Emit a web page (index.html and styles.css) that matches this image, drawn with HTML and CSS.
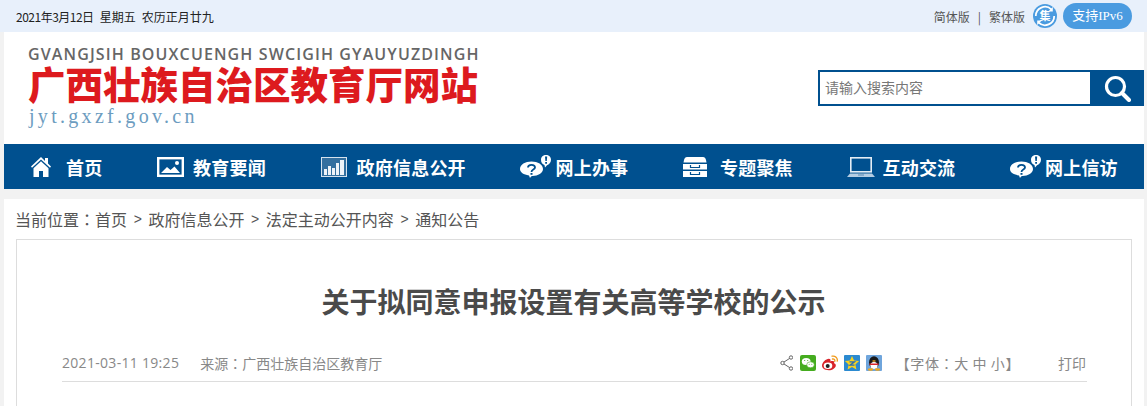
FILE: index.html
```html
<!DOCTYPE html>
<html lang="zh-CN">
<head>
    <meta charset="utf-8">
    <title>关于拟同意申报设置有关高等学校的公示</title>
    <link rel="stylesheet" href="styles.css">
</head>
<body>
    <div class="topbar">
        <div class="date">
            <span class="date-day">2021年3月12日</span>
            <span>星期五</span>
            <span>农历正月廿九</span>
        </div>
        <div class="topbar-right">
            <span class="lang">简体版</span>
            <span class="lang-sep">|</span>
            <span class="lang">繁体版</span>
            <span class="care-icon">
                <svg width="24" height="24" viewBox="0 0 24 24">
                    <circle cx="12" cy="12" r="12" fill="#4a9be0"/>
                    <path d="M2.800 12a9.200 9.200 0 0 1 15.500-6.700M21.200 12a9.200 9.200 0 0 1-15.500 6.700" fill="none" stroke="#fff" stroke-width="1.800"/>
                    <path d="M19.800 3v4.500h-4.500zM4.200 21v-4.500h4.500z" fill="#fff"/>
                    <text x="12" y="16" class="care-char">集</text>
                </svg>
            </span>
            <span class="ipv6">支持IPv6</span>
        </div>
    </div>

    <div class="header">
        <div class="logo">
            <div class="logo-zhuang">GVANGJSIH BOUXCUENGH SWCIGIH GYAUYUZDINGH</div>
            <div class="logo-title">广西壮族自治区教育厅网站</div>
            <div class="logo-url">jyt.gxzf.gov.cn</div>
        </div>
        <div class="search">
            <div class="search-input">请输入搜索内容</div>
            <div class="search-btn">
                <svg width="27" height="27" viewBox="0 0 27 27">
                    <circle cx="11.500" cy="11.500" r="9" fill="none" stroke="#fff" stroke-width="3.200"/>
                    <path d="M18 18l7 7" stroke="#fff" stroke-width="4" stroke-linecap="round"/>
                </svg>
            </div>
        </div>
    </div>

    <div class="nav">
        <a class="nav-item">
            <svg class="nav-icon" width="22" height="20" viewBox="0 0 22 20">
                <path d="M11 0L1 9.500l1 1.200L11 2.500l9 8.200 1-1.200-3-2.900V1h-3v3z" fill="#fff"/>
                <path d="M11 4.200l-7.500 7V20H9v-6h4v6h5.500v-8.800z" fill="#fff"/>
            </svg>
            <span class="nav-label nav-label-first">首页</span>
        </a>
        <a class="nav-item">
            <svg class="nav-icon" width="27" height="20" viewBox="0 0 27 20">
                <rect x="1.200" y="1.200" width="24.600" height="17.600" fill="none" stroke="#fff" stroke-width="2.400"/>
                <path d="M4 16l6-6 3.500 3 4-3.500 5.500 6.500z" fill="#fff"/>
                <circle cx="20" cy="6" r="2" fill="#fff"/>
            </svg>
            <span class="nav-label">教育要闻</span>
        </a>
        <a class="nav-item">
            <svg class="nav-icon nav-icon-chart" width="26" height="20" viewBox="0 0 26 20">
                <rect x="0.500" y="0.500" width="25" height="19" fill="#336f9f" stroke="#d5e2ee"/>
                <path d="M3 12h3v6H3zM7 9h3v9H7zM11 11h3v7h-3zM15 6h3v12h-3zM19 3h4v15h-4z" fill="#eef3f8"/>
            </svg>
            <span class="nav-label">政府信息公开</span>
        </a>
        <a class="nav-item">
            <svg class="nav-icon nav-icon-tight" width="31" height="23" viewBox="0 0 31 23">
                <path d="M11.500 6.500c6.300 0 11.500 3 11.500 7.500 0 4-5 7-10.500 7-1 0-1.500.4-2.500 2l-1-2.500C3.500 19.500 0 17.500 0 14 0 9.500 5.200 6.500 11.500 6.500z" fill="#fff"/>
                <path d="M8 12.500c0-3.500 7-3.500 7 0 0 2.200-3.500 2-3.500 4.500" fill="none" stroke="#00508f" stroke-width="1.800"/>
                <rect x="10.500" y="18" width="2" height="1.800" fill="#00508f"/>
                <path d="M26 0c2.800 0 5 2 5 4.800 0 2.800-2 5-4 5.500L25 12.500l-.5-2.500C22.500 9.500 21 7.500 21 4.800 21 2 23.200 0 26 0z" fill="#fff"/>
                <path d="M25 1.500h2.200l-.4 4.500h-1.400zM25.200 7h1.800v1.800h-1.800z" fill="#00508f"/>
            </svg>
            <span class="nav-label">网上办事</span>
        </a>
        <a class="nav-item">
            <svg class="nav-icon nav-icon-wide" width="24" height="20" viewBox="0 0 24 20">
                <path d="M4 0h16c1.500 0 2.500 1 3 3l.5 2.500H.5L1 3c.5-2 1.500-3 3-3z" fill="#fff"/>
                <path d="M0 7h24v5.500H0zM0 14h24v6H0z" fill="#fff"/>
                <path d="M7.500 8v2.500h9V8M7.500 15v2.500h9V15" fill="none" stroke="#00508f" stroke-width="1.200"/>
            </svg>
            <span class="nav-label">专题聚焦</span>
        </a>
        <a class="nav-item">
            <svg class="nav-icon nav-icon-mid" width="28" height="20" viewBox="0 0 28 20">
                <rect x="3.800" y="0.800" width="20.400" height="14" fill="none" stroke="#e4edf5" stroke-width="1.600"/>
                <path d="M3 16.500h22l3 3.500H0z" fill="#b4cde3"/>
                <rect x="11" y="17.500" width="6" height="1" fill="#5a8cb5"/>
            </svg>
            <span class="nav-label">互动交流</span>
        </a>
        <a class="nav-item">
            <svg class="nav-icon nav-icon-tight" width="31" height="23" viewBox="0 0 31 23">
                <path d="M11.500 6.500c6.300 0 11.500 3 11.500 7.500 0 4-5 7-10.500 7-1 0-1.500.4-2.500 2l-1-2.500C3.500 19.500 0 17.500 0 14 0 9.500 5.200 6.500 11.500 6.500z" fill="#fff"/>
                <path d="M8 12.500c0-3.500 7-3.500 7 0 0 2.200-3.500 2-3.500 4.500" fill="none" stroke="#00508f" stroke-width="1.800"/>
                <rect x="10.500" y="18" width="2" height="1.800" fill="#00508f"/>
                <path d="M26 0c2.800 0 5 2 5 4.800 0 2.800-2 5-4 5.500L25 12.500l-.5-2.500C22.500 9.500 21 7.500 21 4.800 21 2 23.200 0 26 0z" fill="#fff"/>
                <path d="M25 1.500h2.200l-.4 4.500h-1.400zM25.200 7h1.800v1.800h-1.800z" fill="#00508f"/>
            </svg>
            <span class="nav-label">网上信访</span>
        </a>
    </div>

    <div class="main">
        <div class="crumbs">
            <span>当前位置<span class="colon" lang="zh-TW">：</span>首页</span>
            <span class="crumb-sep">&gt;</span>
            <span>政府信息公开</span>
            <span class="crumb-sep">&gt;</span>
            <span>法定主动公开内容</span>
            <span class="crumb-sep">&gt;</span>
            <span>通知公告</span>
        </div>
        <div class="article">
            <h1 class="article-title">关于拟同意申报设置有关高等学校的公示</h1>
            <div class="article-meta">
                <span class="meta-date">2021-03-11 19:25</span>
                <span class="meta-source">来源<span class="colon" lang="zh-TW">：</span>广西壮族自治区教育厅</span>
                <div class="meta-right">
                    <svg class="share-icon" width="13" height="16" viewBox="0 0 13 16">
                        <path d="M11 2.500L2.500 8l8.500 5.500" fill="none" stroke="#666"/>
                        <circle cx="11" cy="2.500" r="1.700" fill="#fff" stroke="#666"/>
                        <circle cx="2.500" cy="8" r="1.700" fill="#fff" stroke="#666"/>
                        <circle cx="11" cy="13.500" r="1.700" fill="#fff" stroke="#666"/>
                    </svg>
                    <svg class="social" width="16" height="16" viewBox="0 0 16 16">
                        <rect width="16" height="16" rx="2" fill="#45ac1f"/>
                        <ellipse cx="6.200" cy="6.500" rx="4.400" ry="3.500" fill="#fff"/>
                        <ellipse cx="10.500" cy="9.800" rx="3.800" ry="3" fill="#fff" stroke="#45ac1f" stroke-width="0.600"/>
                        <circle cx="4.700" cy="5.500" r=".6" fill="#45ac1f"/>
                        <circle cx="7.700" cy="5.500" r=".6" fill="#45ac1f"/>
                        <circle cx="9.200" cy="9.300" r=".5" fill="#45ac1f"/>
                        <circle cx="11.800" cy="9.300" r=".5" fill="#45ac1f"/>
                    </svg>
                    <svg class="social" width="16" height="16" viewBox="0 0 16 16">
                        <path d="M0 10.500C0 7.500 4 3.700 6.800 3.700c1.700 0 2 1.300 1.600 2.800 1.800-.7 3.800-.7 3.800 1 0 .5-.2.800-.2.800 1.100.3 1.800 1 1.800 2.100 0 2.400-3.400 4.800-7 4.800C2.500 15.200 0 13.200 0 10.500z" fill="#d8232a"/>
                        <ellipse cx="6" cy="10.800" rx="4.300" ry="3.200" fill="#fff"/>
                        <circle cx="5.700" cy="11" r="2" fill="#222"/>
                        <path d="M10 1.200c3.200-.7 6 1.800 5.200 5M10.500 4c1.500-.3 2.700.9 2.300 2.300" fill="none" stroke="#f09a1a" stroke-width="1.300" stroke-linecap="round"/>
                    </svg>
                    <svg class="social" width="16" height="16" viewBox="0 0 16 16">
                        <rect width="16" height="16" rx="1" fill="#2b8ad0"/>
                        <path d="M8 1l2.100 4.500 5 .6-3.700 3.400 1 4.900L8 11.900l-4.400 2.500 1-4.900L.9 6.100l5-.6z" fill="#f7d21e"/>
                        <path d="M5.500 6.800h5L6 10.200h4.500" fill="none" stroke="#2b6fb0" stroke-width="1.300"/>
                    </svg>
                    <svg class="social" width="16" height="16" viewBox="0 0 16 16">
                        <rect width="16" height="16" rx="1" fill="#6fa5dc"/>
                        <ellipse cx="8" cy="7.500" rx="5" ry="6.300" fill="#1a1a1a"/>
                        <ellipse cx="8" cy="10.500" rx="3.600" ry="3.600" fill="#fff"/>
                        <path d="M3.500 8.500h9v1.500h-9z" fill="#d8232a"/>
                        <ellipse cx="8" cy="6" rx="1.800" ry=".8" fill="#f2a81d"/>
                        <ellipse cx="4.500" cy="14.500" rx="2.700" ry="1.200" fill="#f2a81d"/>
                        <ellipse cx="11.500" cy="14.500" rx="2.700" ry="1.200" fill="#f2a81d"/>
                    </svg>
                    <span class="font-size">【字体<span class="colon" lang="zh-TW">：</span>大 中 小】</span>
                    <span class="print">打印</span>
                </div>
            </div>
        </div>
    </div>
</body>
</html>
```

FILE: styles.css
```css
* {
    box-sizing: border-box;
}

body {
    margin: 0;
    height: 406px;
    overflow: hidden;
    background: #f2f2f2;
    font-family: "Noto Sans CJK SC", "Noto Sans", sans-serif;
    color: #555;
}

.colon {
    font-family: "Noto Sans CJK TC", sans-serif;
}

.topbar {
    height: 32px;
    display: flex;
    justify-content: space-between;
    align-items: center;
    padding: 0 15px 0 16px;
    background: #e8f0fb;
}

.date {
    display: flex;
    gap: 6px;
    font-size: 12px;
    color: #222;
}

.date-day {
    letter-spacing: -0.500px;
}

.topbar-right {
    display: flex;
    align-items: center;
}

.lang {
    font-size: 12px;
    color: #555;
}

.lang-sep {
    margin: 0 8px;
    font-size: 12px;
    color: #555;
}

.care-icon {
    display: flex;
    margin: 0 6px 0 8px;
}

.care-char {
    font-size: 11px;
    font-weight: bold;
    text-anchor: middle;
    fill: #fff;
}

.ipv6 {
    width: 69px;
    height: 26px;
    border-radius: 13px;
    background: #4a9be0;
    color: #fff;
    font-family: "Liberation Serif", "Noto Sans CJK SC", serif;
    font-size: 13px;
    line-height: 26px;
    text-align: center;
}

.header {
    height: 112px;
    margin: 0 3px 0 4px;
    display: flex;
    justify-content: space-between;
    padding-left: 24px;
    background: #fff;
}

.logo-zhuang {
    margin-top: 13px;
    font-family: "Open Sans", "Noto Sans", sans-serif;
    font-size: 16px;
    font-weight: 600;
    line-height: 18px;
    letter-spacing: 1.120px;
    color: #666;
    white-space: nowrap;
}

.logo-title {
    margin-top: 4px;
    font-family: "Liberation Sans", "Noto Sans CJK SC", sans-serif;
    font-size: 37.500px;
    line-height: 38px;
    font-weight: 900;
    color: #dd1a1e;
    white-space: nowrap;
}

.logo-url {
    padding-left: 1px;
    font-family: "Liberation Serif", serif;
    font-size: 20px;
    line-height: 22px;
    letter-spacing: 3.300px;
    color: #6c9cc0;
}

.search {
    width: 326px;
    height: 36px;
    margin-top: 38px;
    display: flex;
    border: 2px solid #00508f;
}

.search-input {
    flex: 1;
    padding-left: 5px;
    font-size: 14px;
    line-height: 31px;
    color: #777;
}

.search-btn {
    width: 52px;
    display: flex;
    justify-content: center;
    align-items: center;
    padding-left: 2px;
    background: #00508f;
}

.nav {
    height: 45px;
    margin: 0 3px 0 4px;
    display: flex;
    align-items: center;
    gap: 54.700px;
    padding-left: 26px;
    background: #00508f;
}

.nav-item {
    display: flex;
    align-items: center;
}

.nav-icon {
    margin-right: 9px;
    flex-shrink: 0;
}

.nav-icon-chart {
    margin-right: 10px;
}

.nav-icon-tight {
    margin-right: 4px;
}

.nav-icon-wide {
    margin-right: 13px;
}

.nav-icon-mid {
    margin-right: 7px;
}

.nav-label {
    font-size: 18px;
    font-weight: 700;
    letter-spacing: 0.200px;
    color: #fff;
    white-space: nowrap;
}

.nav-label-first {
    margin-left: 5px;
}

.main {
    margin: 10px 3px 0 4px;
    height: 207px;
    padding: 0 12px;
    background: #fff;
}

.crumbs {
    height: 40px;
    display: flex;
    align-items: center;
    gap: 6.600px;
    margin-left: -1px;
    font-size: 16px;
    color: #555;
}

.crumb-sep {
    font-family: "Liberation Sans", sans-serif;
    font-size: 14px;
}

.article {
    height: 170px;
    padding: 0 44px 0 45px;
    border: 1px solid #ddd;
}

.article-title {
    margin: 41px 0 0;
    padding-right: 2px;
    font-size: 28px;
    line-height: 40px;
    font-weight: 700;
    color: #4a4a4a;
    text-align: center;
}

.article-meta {
    height: 38px;
    margin-top: 23px;
    display: flex;
    align-items: center;
    border-bottom: 1px solid #ddd;
    color: #888;
}

.meta-date {
    font-family: "Open Sans", sans-serif;
    font-size: 14px;
    letter-spacing: 0.300px;
}

.meta-source {
    margin-left: 21px;
    font-size: 14px;
}

.meta-right {
    margin-left: auto;
    margin-right: 1px;
    display: flex;
    align-items: center;
}

.share-icon {
    margin-right: 7px;
}

.social {
    margin-right: 6px;
}

.font-size {
    margin-left: 8px;
    font-size: 14px;
    letter-spacing: 0.600px;
}

.print {
    margin-left: 38px;
    font-size: 14px;
}
```
